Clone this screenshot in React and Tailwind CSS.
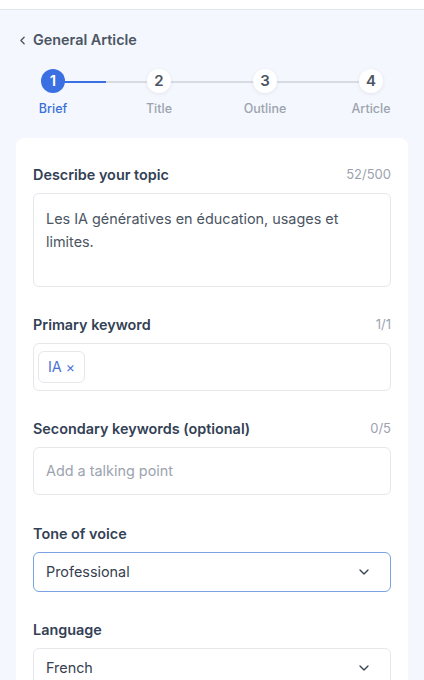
import { ChevronLeft, ChevronDown } from 'lucide-react'

const steps = ['Brief', 'Title', 'Outline', 'Article']

function Label({ children, count }) {
  return (
    <div className="flex items-center justify-between h-5">
      <span className="text-[14.4px] font-semibold text-[#334155]">{children}</span>
      {count && <span className="text-[13px] text-[#9ca3af]">{count}</span>}
    </div>
  )
}

function Select({ value, focused }) {
  return (
    <div
      className={`mt-[8px] h-10 rounded-md bg-white flex items-center justify-between pl-[12px] pr-[18px] border ${focused ? 'border-[#7ba3e3]' : 'border-[#e5e7eb]'}`}
    >
      <span className="text-[14.4px] text-[#374151]">{value}</span>
      <ChevronDown size={16} strokeWidth={2} className="text-[#374151]" />
    </div>
  )
}

export default function App() {
  return (
    <div className="min-h-screen bg-[#f4f7fd] font-['Inter',sans-serif] overflow-hidden">
      <div className="h-[10px] bg-white border-b border-[#e3e6ec]" />

      <div className="pl-[16px] pt-[20px] flex items-center gap-[4px] h-[40px] text-[#4b5563]">
        <ChevronLeft size={13} strokeWidth={2.5} />
        <span className="text-[14.4px] font-semibold">General Article</span>
      </div>

      {/* Stepper */}
      <div className="relative grid grid-cols-4 mt-[19px]">
        <div className="absolute top-[12px] left-[53px] right-[53px] h-[2px] bg-[#d7dbe3]" />
        <div className="absolute top-[12px] left-[53px] w-[53px] h-[2px] bg-[#3b70e2]" />
        {steps.map((s, i) => (
          <div key={s} className="relative flex flex-col items-center">
            <div
              className={`w-6 h-6 rounded-full flex items-center justify-center text-[15px] font-semibold ${i === 0 ? 'bg-[#3b70e2] text-white' : 'bg-white text-[#4b5563] shadow-[0_1px_4px_rgba(15,23,42,0.08)]'}`}
            >
              {i + 1}
            </div>
            <span className={`mt-[7px] text-[12.5px] font-medium ${i === 0 ? 'text-[#3b6fd8]' : 'text-[#9ca3af]'}`}>{s}</span>
          </div>
        ))}
      </div>

      {/* Card */}
      <div className="mx-4 mt-[19px] bg-white rounded-lg px-[17px] pt-[27px] pb-6">
        <Label count="52/500">Describe your topic</Label>
        <div className="mt-[8px] h-[94px] rounded-md border border-[#e5e7eb] px-[12px] pt-[13px] text-[14.4px] leading-[23px] text-[#4b5563]">
          Les IA génératives en éducation, usages et limites.
        </div>

        <div className="mt-[28px]">
          <Label count="1/1">Primary keyword</Label>
          <div className="mt-[8px] h-12 rounded-md border border-[#e5e7eb] flex items-center px-[4px]">
            <span className="h-8 px-[9px] rounded-md border border-[#e5e7eb] flex items-center gap-[4px] text-[14.4px] text-[#4a72d4]">
              IA <span className="text-[14px]">×</span>
            </span>
          </div>
        </div>

        <div className="mt-[28px]">
          <Label count="0/5">Secondary keywords (optional)</Label>
          <div className="mt-[8px] h-12 rounded-md border border-[#e5e7eb] flex items-center px-[12px] text-[14.4px] text-[#9ca3af]">
            Add a talking point
          </div>
        </div>

        <div className="mt-[29px]">
          <Label>Tone of voice</Label>
          <Select value="Professional" focused />
        </div>

        <div className="mt-[28px]">
          <Label>Language</Label>
          <Select value="French" />
        </div>
      </div>
    </div>
  )
}
